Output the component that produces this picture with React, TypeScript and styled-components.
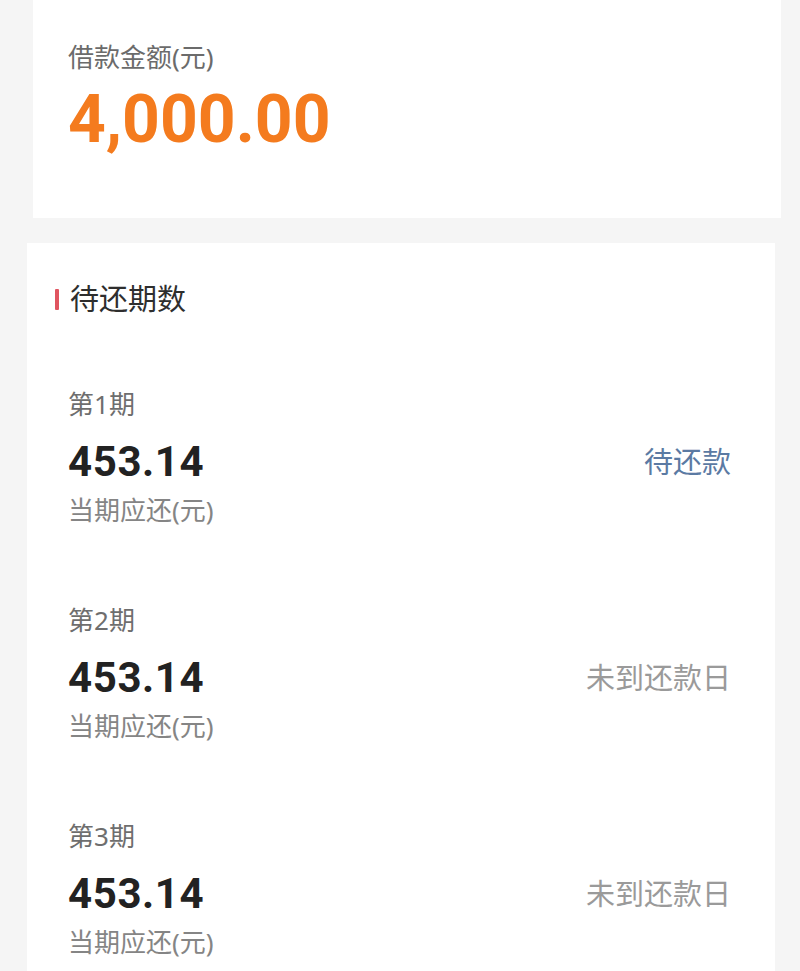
import React from 'react';
import styled, { createGlobalStyle } from 'styled-components';

const GlobalStyle = createGlobalStyle`
  html, body {
    margin: 0;
    padding: 0;
    background: #f5f5f5;
  }
  body {
    font-family: 'Noto Sans', 'Noto Sans CJK SC', sans-serif;
  }
`;

const Page = styled.div`
  display: flex;
  flex-direction: column;
  gap: 25px;
  width: 800px;
  min-height: 971px;
  background: #f5f5f5;
`;

const Card = styled.div<{ $inset: number }>`
  box-sizing: border-box;
  width: 748px;
  margin-left: ${props => props.$inset}px;
  background: #fff;
`;

const AmountCard = styled(Card)`
  height: 218px;
  padding: 40px 0 0 35px;
`;

const Caption = styled.div`
  font-size: 26px;
  line-height: 34px;
  color: #6b6b6b;
`;

const LoanAmount = styled.div`
  margin-top: 11px;
  font-family: Roboto, 'Liberation Sans', sans-serif;
  font-weight: 700;
  font-size: 66px;
  line-height: 70px;
  color: #f47b1e;
`;

const PlanCard = styled(Card)`
  padding: 36px 44px 0 28px;
  min-height: 728px;
`;

const SectionTitle = styled.div`
  display: flex;
  align-items: center;
  gap: 11px;
  font-size: 29px;
  line-height: 40px;
  color: #2e2e2e;
`;

const Marker = styled.span`
  width: 4px;
  height: 21px;
  border-radius: 1px;
  background: #e05560;
`;

const Periods = styled.div`
  display: flex;
  flex-direction: column;
  gap: 76px;
  margin-top: 68px;
  padding-left: 13px;
`;

const Period = styled.div`
  display: flex;
  flex-direction: column;
`;

const PeriodLabel = styled(Caption)`
  color: #6e6e6e;
`;

const AmountRow = styled.div`
  display: flex;
  align-items: center;
  justify-content: space-between;
  margin-top: 16px;
`;

const Due = styled.div`
  font-family: Roboto, 'Liberation Sans', sans-serif;
  font-weight: 700;
  font-size: 42px;
  line-height: 50px;
  letter-spacing: 0.6px;
  color: #222;
`;

const Status = styled.div<{ $active: boolean }>`
  font-size: 29px;
  line-height: 40px;
  color: ${props => (props.$active ? '#5b7aa3' : '#9a9a9a')};
`;

const SubLabel = styled(Caption)`
  margin-top: 6px;
  color: #858585;
`;

const periods = [
  { index: 1, due: '453.14', status: '待还款', active: true },
  { index: 2, due: '453.14', status: '未到还款日', active: false },
  { index: 3, due: '453.14', status: '未到还款日', active: false },
];

export default function App() {
  return (
    <>
      <GlobalStyle />
      <Page>
        <AmountCard $inset={33}>
          <Caption>借款金额(元)</Caption>
          <LoanAmount>4,000.00</LoanAmount>
        </AmountCard>
        <PlanCard $inset={27}>
          <SectionTitle>
            <Marker />
            待还期数
          </SectionTitle>
          <Periods>
            {periods.map(p => (
              <Period key={p.index}>
                <PeriodLabel>第{p.index}期</PeriodLabel>
                <AmountRow>
                  <Due>{p.due}</Due>
                  <Status $active={p.active}>{p.status}</Status>
                </AmountRow>
                <SubLabel>当期应还(元)</SubLabel>
              </Period>
            ))}
          </Periods>
        </PlanCard>
      </Page>
    </>
  );
}
